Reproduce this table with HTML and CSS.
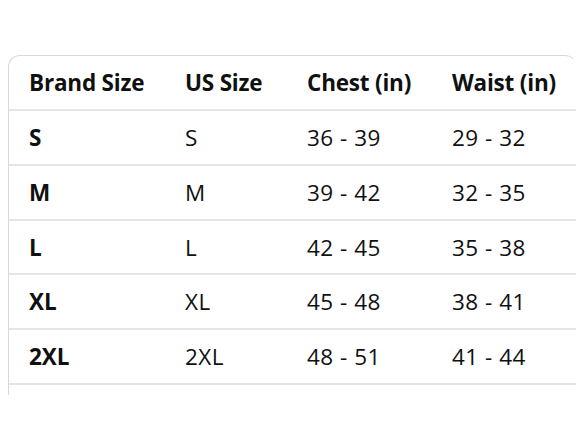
FILE: index.html
```html
<!DOCTYPE html>
<html>
<head>
<meta charset="utf-8">
<link rel="stylesheet" href="styles.css">
</head>
<body>
<div class="page">
  <div class="card">
    <table class="size-table">
      <colgroup>
        <col class="c1"><col class="c2"><col class="c3"><col class="c4">
      </colgroup>
      <thead>
        <tr class="head-row">
          <th>Brand Size</th><th>US Size</th><th>Chest (in)</th><th>Waist (in)</th>
        </tr>
      </thead>
      <tbody>
        <tr class="row r2"><td class="brand">S</td><td>S</td><td>36 - 39</td><td>29 - 32</td></tr>
        <tr class="row r2"><td class="brand">M</td><td>M</td><td>39 - 42</td><td>32 - 35</td></tr>
        <tr class="row r1"><td class="brand">L</td><td>L</td><td>42 - 45</td><td>35 - 38</td></tr>
        <tr class="row r2"><td class="brand">XL</td><td>XL</td><td>45 - 48</td><td>38 - 41</td></tr>
        <tr class="row r2"><td class="brand">2XL</td><td>2XL</td><td>48 - 51</td><td>41 - 44</td></tr>
      </tbody>
    </table>
  </div>
</div>
</body>
</html>
```

FILE: styles.css
```css
html, body {
  margin: 0;
  padding: 0;
  background: #ffffff;
}

.page {
  padding: 55px 11px 0 8px;
  font-family: "Open Sans", "Noto Sans", "DejaVu Sans", sans-serif;
  color: #0f1111;
}

.card {
  width: 569px;
  height: 340px;
  box-sizing: border-box;
  border-top: 1px solid #d5d9d9;
  border-left: 1px solid #d5d9d9;
  border-right: 1px solid rgba(213, 217, 217, 0);
  border-radius: 12px 12px 0 0;
  overflow: hidden;
}

.size-table {
  border-collapse: collapse;
  table-layout: fixed;
  width: 567px;
}

.c1 { width: 156px; }
.c2 { width: 122px; }
.c3 { width: 145px; }
.c4 { width: 144px; }

.size-table th,
.size-table td {
  padding: 0 0 0 20px;
  text-align: left;
  white-space: nowrap;
  font-size: 22.5px;
  letter-spacing: -0.2px;
  border-bottom: 2px solid #e3e6e6;
}

.size-table th {
  font-weight: 700;
  height: 53px;
}

.size-table td {
  font-weight: 400;
  letter-spacing: 0.5px;
}

.size-table td.brand {
  font-weight: 700;
  letter-spacing: 0;
}

.r1 td { height: 52px; }
.r2 td { height: 53px; }
```
